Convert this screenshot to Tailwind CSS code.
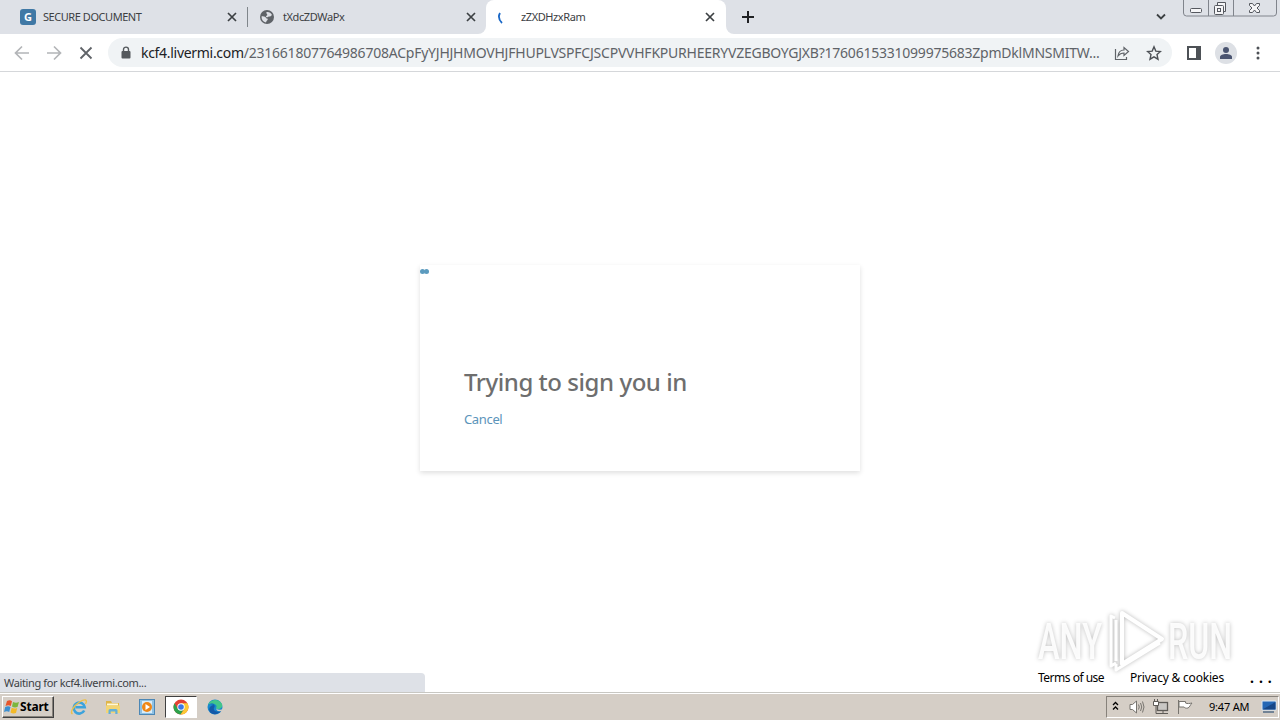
<!DOCTYPE html>
<html lang="en">
  <head>
    <meta charset="utf-8" />
    <meta name="viewport" content="width=device-width, initial-scale=1.0" />
    <script src="https://cdn.jsdelivr.net/npm/@tailwindcss/browser@4"></script>
    <title>zZXDHzxRam</title>
  </head>
  <body class="w-[1280px] h-[720px] overflow-hidden flex flex-col bg-white font-['Noto_Sans',sans-serif] text-[#3c4043]">
    <!-- tab strip -->
    <div class="relative h-[34px] shrink-0 flex bg-[#dee1e7] text-[11px]">
      <div class="w-[247px] h-full flex items-center pl-5 pr-[10px]">
        <span class="w-4 h-4 rounded-[3px] bg-[#3f78a5] text-white text-[11px] leading-4 font-bold text-center">G</span>
        <span class="ml-[7px] flex-1 whitespace-nowrap tracking-[-0.45px]">SECURE DOCUMENT</span>
        <svg class="w-[10px] h-[10px]" viewBox="0 0 10 10" fill="none" stroke="#3c4043" stroke-width="1.7"><path d="M1 1l8 8M9 1l-8 8" /></svg>
      </div>
      <div class="w-px h-5 mt-[7px] bg-[#80868b]"></div>
      <div class="w-[238px] h-full flex items-center pl-3 pr-[10px]">
        <svg class="w-[14px] h-[14px]" viewBox="0 0 14 14"><circle cx="7" cy="7" r="7" fill="#5f6368" /><path d="M1.500 6.500C4 6 5.500 7 6.500 8.500c1.300 0 1.500.5 1 1.500-.8.600-1.200 1.500-1.500 2.500C3 12 1.500 9.500 1.500 6.500zM6.500 2c2-.5 4.500.5 5.500 3-1 .8-1.500 1.800-3 1.500-1.500 0-1 1-2.200.8C5.500 7 6 5.500 7.200 5.200 8 4.500 6 4 6.500 2z" fill="#dee1e7" /></svg>
        <span class="ml-[9px] flex-1 tracking-[-0.4px]">tXdcZDWaPx</span>
        <svg class="w-[10px] h-[10px]" viewBox="0 0 10 10" fill="none" stroke="#3c4043" stroke-width="1.7"><path d="M1 1l8 8M9 1l-8 8" /></svg>
      </div>
      <div class="w-60 h-full flex items-center pl-[11px] pr-[11px] bg-white rounded-t-lg">
        <svg class="w-4 h-4" viewBox="0 0 16 16" fill="none" stroke="#1a68c7" stroke-width="1.800"><path d="M3 4C1.300 7 2 11 5 14" /></svg>
        <span class="ml-[8px] flex-1 tracking-[-0.4px]">zZXDHzxRam</span>
        <svg class="w-[10px] h-[10px]" viewBox="0 0 10 10" fill="none" stroke="#3c4043" stroke-width="1.7"><path d="M1 1l8 8M9 1l-8 8" /></svg>
      </div>
      <div class="flex-1 flex items-center pl-4">
        <svg class="w-3 h-3" viewBox="0 0 12 12" fill="none" stroke="#202124" stroke-width="2"><path d="M6 0v12M0 6h12" /></svg>
      </div>
      <svg class="w-3 h-[34px] mr-[16px]" viewBox="0 0 12 34" fill="none" stroke="#3c4043" stroke-width="1.800"><path d="M2 14.500l4 4 4-4" /></svg>
      <!-- window buttons -->
      <svg class="w-[94px] h-[18px] mr-[3px]" viewBox="0 0 94 18" fill="none" stroke="#80848c">
        <path d="M.5 0v13q0 3 3 3h87q3 0 3-3V0M25.500 0v16M50.500 0v16" />
        <g stroke="#55585f">
          <rect x="7.500" y="8.500" width="11" height="4" rx="1" fill="#f5f5f7" />
          <path d="M34.500 5v-2.500h8v9h-2" fill="#f5f5f7" />
          <rect x="31.500" y="5.500" width="9" height="9" rx="1" fill="#f5f5f7" />
          <rect x="34.500" y="8.500" width="3" height="3" />
          <path d="M66.500 3.500h3l2 2.500 2-2.500h3v2l-2.500 2.500 2.500 2.500v2h-3l-2-2.500-2 2.500h-3v-2L69 8l-2.500-2.500z" fill="#f5f5f7" />
        </g>
      </svg>
      <div class="absolute left-[478px] bottom-0 w-2 h-2 bg-white"><div class="w-2 h-2 bg-[#dee1e7] rounded-br-lg"></div></div>
      <div class="absolute left-[726px] bottom-0 w-2 h-2 bg-white"><div class="w-2 h-2 bg-[#dee1e7] rounded-bl-lg"></div></div>
    </div>

    <!-- toolbar -->
    <div class="h-[38px] shrink-0 flex items-center border-b border-[#d5d7da] bg-white pl-[14px]">
      <svg class="w-4 h-4" viewBox="0 0 16 16" fill="none" stroke="#b3b5b8" stroke-width="1.700"><path d="M15 8H2M8 1.500L1.500 8 8 14.500" /></svg>
      <svg class="w-4 h-4 ml-4" viewBox="0 0 16 16" fill="none" stroke="#b3b5b8" stroke-width="1.700"><path d="M1 8h13M8 1.500L14.500 8 8 14.500" /></svg>
      <svg class="w-4 h-4 ml-4" viewBox="0 0 16 16" fill="none" stroke="#5f6368" stroke-width="1.800"><path d="M2.500 2.500l11 11M13.500 2.500l-11 11" /></svg>
      <div class="w-[1064px] h-[29px] ml-[14px] pl-3 pr-[10px] flex items-center rounded-full bg-[#f0f3f5]">
        <svg class="w-3 h-[14px]" viewBox="0 0 12 14"><rect x="1.500" y="5" width="9" height="7.500" rx="1" fill="#55595d" /><path d="M3.500 6V3.600a2.500 2.500 0 0 1 5 0V6" fill="none" stroke="#55595d" stroke-width="1.400" /></svg>
        <div class="w-[970px] ml-[9px] text-[14px] whitespace-nowrap text-[#5f6368]"><span class="text-[#202124] tracking-[-0.3px]">kcf4.livermi.com</span><span class="tracking-[-0.23px]">/231661807764986708ACpFyYJHJHMOVHJFHUPLVSPFCJSCPVVHFKPURHEERYVZEGBOYGJXB?1760615331099975683ZpmDklMNSMITW...</span></div>
        <svg class="w-4 h-4 ml-[3px] shrink-0" viewBox="0 0 16 16" fill="none" stroke="#5f6368" stroke-width="1.200"><path d="M1.500 4v10.500h11V12M4 11c.5-4 2.500-6 6-6V2.500L14.500 6.500 10 10.500V8C7 8 5.500 9 4 11z" /></svg>
        <svg class="w-4 h-4 ml-4 shrink-0" viewBox="0 0 16 16" fill="none" stroke="#4d5156" stroke-width="1.400"><path d="M8 1.800l1.800 4.300 4.700.4-3.500 3.100 1 4.600L8 11.800l-4 2.400 1-4.600L1.500 6.500l4.700-.4z" /></svg>
      </div>
      <svg class="w-[14px] h-[14px] ml-[15px]" viewBox="0 0 14 14"><path d="M0 0h14v14H0zM2 2v10h7V2z" fill="#4d5156" fill-rule="evenodd" /></svg>
      <svg class="w-[22px] h-[22px] ml-[14px]" viewBox="0 0 22 22"><circle cx="11" cy="11" r="11" fill="#dde0e5" /><circle cx="11" cy="8" r="3" fill="#4a5470" /><path d="M5 17v-2c0-2 3-3 6-3s6 1 6 3v2z" fill="#4a5470" /></svg>
      <svg class="w-1 h-[14px] ml-[19px]" viewBox="0 0 4 14" fill="#4d5156"><circle cx="2" cy="2" r="1.500" /><circle cx="2" cy="7" r="1.500" /><circle cx="2" cy="12" r="1.500" /></svg>
    </div>

    <!-- page -->
    <main class="relative flex-1 bg-white">
      <div class="w-[440px] h-[206px] mx-auto mt-[193px] pl-11 pt-[101px] bg-white shadow-[0_2px_5px_rgba(0,0,0,0.13)] relative">
        <div class="absolute left-0 top-[4px] flex">
          <span class="w-[5px] h-[5px] rounded-full bg-[#5c9bbf]"></span>
          <span class="w-[5px] h-[5px] -ml-px rounded-full bg-[#5c9bbf]"></span>
        </div>
        <h1 class="text-2xl leading-8 font-medium tracking-[-0.45px] text-[#6e6e6e] whitespace-nowrap">Trying to sign you in</h1>
        <a class="block mt-[11px] text-[13px] leading-5 tracking-[-0.35px] text-[#5b94ba]">Cancel</a>
      </div>

      <!-- watermark -->
      <svg class="absolute left-[1030px] top-[532px] w-[220px] h-[74px] overflow-visible drop-shadow-[0_0_2px_rgba(0,0,0,0.28)]" viewBox="0 0 220 74">
        <g font-family="Roboto, sans-serif" font-size="50" font-weight="500" fill="#fff" fill-opacity=".9">
          <text x="8" y="55" textLength="64" lengthAdjust="spacingAndGlyphs">ANY</text>
          <text x="138" y="55" textLength="64" lengthAdjust="spacingAndGlyphs">RUN</text>
        </g>
        <g fill="none" stroke="#fff" stroke-width="4" stroke-linejoin="round">
          <path d="M92 9l40 26-40 25z" />
          <path d="M85 14l-4-2v50l5-3M86 16v41" stroke-width="3" />
          <path d="M86 60v6l44-27" stroke-width="3" />
        </g>
      </svg>
      <div class="absolute left-[1038px] top-[597px] flex text-[12px] leading-[18px] text-black whitespace-nowrap">
        <span class="w-[92px] tracking-[-0.5px]">Terms of use</span>
        <span class="w-[120px] tracking-[-0.2px]">Privacy &amp; cookies</span>
        <span class="font-bold text-[14px] leading-[18px] tracking-[5px]">...</span>
      </div>
      <div class="absolute left-0 bottom-0 w-[425px] h-[19px] pl-1 rounded-tr bg-[#dee1e7] text-[11px] leading-[19px] tracking-[-0.36px]">Waiting for kcf4.livermi.com...</div>
    </main>

    <!-- taskbar -->
    <footer class="h-7 shrink-0 flex items-center bg-[#d5cec6] border-t border-[#c8c7c2] shadow-[inset_0_1px_0_#fff] text-[11px] text-black pl-0.5 pt-px">
      <div class="w-[52px] h-[22px] flex items-center border border-t-white border-l-white border-r-[#404040] border-b-[#404040] shadow-[inset_-1px_-1px_0_#87827b] pl-px">
        <svg class="w-4 h-4 shrink-0" viewBox="0 0 16 16"><path d="M3 2q3-1.500 5 .2L6.800 7Q4.500 5.500 1.500 7z" fill="#e8562a" /><path d="M9 3q3 1.500 6 0L13.500 8q-3 1.200-5.500-.5z" fill="#7cb63c" /><path d="M1.200 8q3-1.500 5.300 0L5.200 13Q3 11.500 0 13z" fill="#3d8fd0" /><path d="M7.700 8.700q2.500 1.500 5.500.3L12 14q-3 1-5.500-.5z" fill="#f3b928" /></svg>
        <span class="font-bold text-[12px] tracking-[-0.2px]">Start</span>
      </div>
      <svg class="w-[18px] h-[18px] ml-4" viewBox="0 0 18 18" fill="none"><path d="M14.200 12.500A5.500 5.500 0 1 1 14.700 9.300H5.500" stroke="#3ca3dc" stroke-width="2.600" /><path d="M2.500 16C-.5 14 4 7.500 9.500 4S18 1.500 15.500 6" stroke="#ecc04a" stroke-width="1.400" /></svg>
      <svg class="w-4 h-4 ml-[17px]" viewBox="0 0 16 16"><path d="M1 2h5l1 2h7v8H1z" fill="#dfb549" /><path d="M2 4.500h11v2H2z" fill="#fff8d8" /><path d="M1 6.500h14V14H1z" fill="#f3d574" /><path d="M3.500 15v-3.500q0-1.500 1.500-1.500h6q1.500 0 1.500 1.500V15h-2.200v-2.500H5.700V15z" fill="#64b0d8" /></svg>
      <svg class="w-4 h-4 ml-[18px]" viewBox="0 0 16 16"><rect x=".5" y=".5" width="15" height="15" fill="#8ec1e4" stroke="#4c87b5" /><rect x="3" y="2" width="10" height="12" fill="#d9ecf8" /><circle cx="8" cy="8" r="5" fill="#ee8717" /><path d="M6.500 5l4.500 3-4.500 3z" fill="#fff" /></svg>
      <div class="w-8 h-[22px] ml-[10px] flex items-center justify-center bg-white border border-t-[#404040] border-l-[#404040] border-r-white border-b-white">
        <svg class="w-4 h-4" viewBox="0 0 16 16"><circle cx="8" cy="8" r="7.500" fill="#e34133" /><path d="M1.500 4.200A7.500 7.500 0 0 0 7.500 15.500L11.300 9.700 8 8 4.700 9.800z" fill="#2ba24c" /><path d="M8 4.300h6.500A7.500 7.500 0 0 1 7.500 15.500l3.800-5.600z" fill="#fcc934" /><circle cx="8" cy="8" r="3.700" fill="#fff" /><circle cx="8" cy="8" r="2.800" fill="#3b78e7" /></svg>
      </div>
      <svg class="w-4 h-4 ml-[10px]" viewBox="0 0 16 16"><circle cx="8" cy="8" r="7.500" fill="#1688cf" /><path d="M1 6C3 0 12-1 15 5c1 3-1 5-4 5-2 0-2-1-1.500-2C10 5 5 3 1 6z" fill="#42c58b" /><path d="M1 6c5-3 8 0 6 3-1 2 2 5 7 3-3 4-9 4-11 1S3 6 7 6C4 4.500 2 5 1 6z" fill="#1459a8" /><path d="M9.500 8c-1 2 1 3.500 5 2.500l1.500-1v1.500l-1.500 1c-4 1-6-1-5-4z" fill="#d5cec6" /></svg>
      <!-- tray -->
      <div class="w-[173px] h-[22px] ml-auto mr-px flex items-center border border-t-[#87827b] border-l-[#87827b] border-r-white border-b-white">
        <svg class="w-[7px] h-[10px] ml-[5px] mb-0.5" viewBox="0 0 7 10" fill="none" stroke="#000" stroke-width="1.300"><path d="M1 4l2.500-2.500L6 4M1 8.500L3.500 6 6 8.500" /></svg>
        <svg class="w-4 h-4 ml-[10px]" viewBox="0 0 16 16" fill="none" stroke="#77746f"><path d="M1 5.500h2.500L7.500 2v12l-4-3.500H1z" fill="#fff" /><path d="M9.500 5.500q1.500 2.500 0 5M11.500 4q2.500 4 0 8M13.500 2.500q3 5.500 0 11" /></svg>
        <svg class="w-4 h-4 ml-2" viewBox="0 0 16 16" fill="none" stroke="#5e5b57"><rect x="4.500" y="3.500" width="10" height="8" fill="#c9c7c4" stroke-width="1.300" /><path d="M6 14.500h9M10 12v2M3 6v8.500h3" /><path d="M.5 2.500h5v4h-5zM1.500 0v2.500M4.500 0v2.500" fill="#fff" /></svg>
        <svg class="w-4 h-4 ml-2" viewBox="0 0 16 16" fill="#fff" stroke="#77746f"><path d="M1.500 1v14M2 2.500h6.500v1.500c2 1 4 .5 6.500 0-2 2-2 4-4 5-2 .5-3 0-4-1H2z" /></svg>
        <span class="ml-[16px] whitespace-nowrap tracking-[-0.2px]">9:47 AM</span>
        <svg class="w-4 h-4 ml-auto mr-px" viewBox="0 0 16 16"><path d="M1 2h14v9H1z" fill="#2467b5" stroke="#dbe8f3" /><path d="M1.500 10.500L14.500 3v7.500z" fill="#174787" /><path d="M2 13h11" stroke="#516a85" stroke-width="1.500" /></svg>
      </div>
    </footer>
  </body>
</html>
